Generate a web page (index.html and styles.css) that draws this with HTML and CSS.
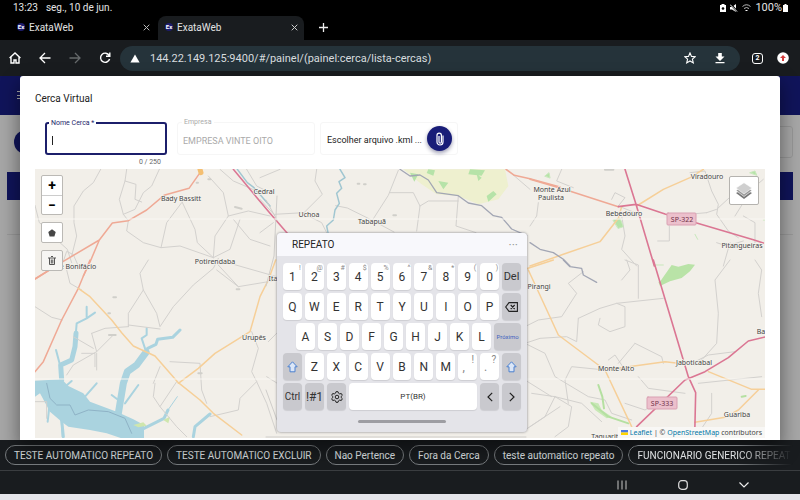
FILE: index.html
```html
<!DOCTYPE html>
<html lang="pt-BR">
<head>
<meta charset="utf-8">
<meta name="viewport" content="width=device-width, initial-scale=1">
<title>ExataWeb</title>
<link rel="stylesheet" href="styles.css">
</head>
<body>
<header class="status">
  <span>13:23</span><span class="date">seg., 10 de jun.</span>
  <div class="status-icons">
    <svg width="6" height="8" viewBox="0 0 6 8"><path fill="#fff" d="M1.5 0h3v1H6v7H0V1h1.500z"/><circle cx="3" cy="4.500" r="1.300" fill="#000"/></svg>
    <svg width="8" height="8" viewBox="0 0 8 8"><path fill="#fff" d="M0 3h2l4-3v8L2 5.500H0z"/><path d="M.5 0l7 8" stroke="#000" stroke-width="2"/><path d="M0 .5l7 7" stroke="#fff"/></svg>
    <svg width="9" height="8" viewBox="0 0 9 8" fill="none" stroke="#bbb"><path d="M.5 2.500q4-3.500 8 0M2 4.500q2.500-2 5 0"/><path d="M3.500 6.500h2" stroke="#fff"/></svg>
    <span class="battery">100%<svg width="5" height="8" viewBox="0 0 5 8"><path fill="#fff" d="M1.500 0h2v1H5v7H0V1h1.500z"/></svg></span>
  </div>
</header>

<nav class="tabs" aria-label="Abas">
  <div class="tab">
    <span class="favicon">Ex</span><span class="tab-name">ExataWeb</span>
    <button class="plain" aria-label="Fechar aba"><svg width="7" height="7" viewBox="0 0 7 7"><path d="M.7.7l5.600 5.600M6.300.7L.7 6.300" stroke="#bbb"/></svg></button>
  </div>
  <div class="tab active">
    <span class="favicon">Ex</span><span class="tab-name">ExataWeb</span>
    <button class="plain" aria-label="Fechar aba"><svg width="7" height="7" viewBox="0 0 7 7"><path d="M.7.7l5.600 5.600M6.300.7L.7 6.300" stroke="#ccc"/></svg></button>
  </div>
  <button class="plain new-tab" aria-label="Nova aba"><svg width="9" height="9" viewBox="0 0 9 9"><path d="M4.500 0v9M0 4.500h9" stroke="#eee" stroke-width="1.300"/></svg></button>
</nav>

<div class="toolbar">
  <div class="nav-buttons">
    <button class="plain" aria-label="Início"><svg width="12" height="12" viewBox="0 0 12 12" fill="none" stroke="#fff" stroke-width="1.400"><path d="M.6 6L6 1l5.400 5M2 5v6h3V8h2v3h3V5"/></svg></button>
    <button class="plain" aria-label="Voltar"><svg width="12" height="12" viewBox="0 0 12 12" fill="none" stroke="#fff" stroke-width="1.300"><path d="M11.500 6H1.200M6 1L1 6l5 5"/></svg></button>
    <button class="plain" aria-label="Avançar"><svg width="12" height="12" viewBox="0 0 12 12" fill="none" stroke="#65696b" stroke-width="1.300"><path d="M.5 6h10.300M6 1l5 5-5 5"/></svg></button>
    <button class="plain" aria-label="Recarregar"><svg width="12" height="12" viewBox="0 0 12 12" fill="none" stroke="#fff" stroke-width="1.400"><path d="M10.200 3.500A4.600 4.600 0 1 0 10.600 7M10.800.5v3.800H7"/></svg></button>
  </div>
  <div class="address">
    <svg width="10" height="9" viewBox="0 0 10 9"><path d="M5 .5L9.600 8.500H.4z" fill="#fff"/></svg>
    <span class="url">144.22.149.125:9400/#/painel/(painel:cerca/lista-cercas)</span>
    <button class="plain" aria-label="Favorito"><svg width="12" height="12" viewBox="0 0 12 12"><path d="M6 .9l1.500 3.500 3.800.3-2.900 2.500.9 3.700L6 9l-3.300 1.900.9-3.700L.7 4.700l3.800-.3z" fill="none" stroke="#fff" stroke-width="1.100"/></svg></button>
    <button class="plain" aria-label="Baixar"><svg width="10" height="12" viewBox="0 0 10 12" fill="#fff"><path d="M3.200 1h3.600v3.500h2.700L5 9 .5 4.500h2.700zM.5 10h9v1.300h-9z"/></svg></button>
  </div>
  <button class="tab-count">2</button>
  <button class="plain" aria-label="Menu"><svg width="12" height="12" viewBox="0 0 12 12"><circle cx="6" cy="6" r="5.800" fill="#fff"/><path d="M6 3l3 3H7v3H5V6H3z" fill="#d33c3c"/></svg></button>
</div>

<main class="page">
  <div class="behind">
    <div class="app-bar"></div>
    <div class="behind-tools"><span class="round"></span><span class="ghost-field"></span></div>
    <div class="table-head"></div>
    <div class="table-row"></div>
    <span class="burger"></span>
  </div>

  <section class="dialog">
    <h1>Cerca Virtual</h1>
    <form class="fields">
      <div class="field name-field">
        <label for="nome">Nome Cerca *</label>
        <input id="nome" type="text">
        <span class="caret"></span>
        <span class="counter">0 / 250</span>
      </div>
      <div class="field company">
        <label for="empresa">Empresa</label>
        <input id="empresa" type="text" value="EMPRESA VINTE OITO" disabled>
      </div>
      <div class="field file">
        <span>Escolher arquivo .kml ...</span>
        <button type="button" class="attach" aria-label="Anexar"><svg width="8" height="14" viewBox="0 0 8 14" fill="none" stroke="#fff" stroke-width="1.200"><path d="M7 3.500v6.500a3 3 0 0 1-6 0V3.300a2.200 2.200 0 0 1 4.400 0V10a1.200 1.200 0 0 1-2.400 0V4"/></svg></button>
      </div>
    </form>

    <div class="map">
      <svg class="map-canvas" viewBox="35 169 730 269" preserveAspectRatio="xMidYMid slice" fill="none" stroke-linejoin="round" stroke-linecap="round">
        <rect x="35" y="169" width="730" height="269" fill="#f2efe9"/>
        <!-- north-west -->
        <g transform="translate(0 76) scale(.33333)">
          <g class="minor">
            <path d="M105 388l13 52 34 25 28 35 22 20 13 40M302 280l-22 40-30 25-28 45v50l8 40-15 60M380 280l-5 35 33 10-3 45 20 8M375 315l-17 55 12 45 15 19M478 280l-23 50-25 20-25 50-35 15M545 380l-45 60-17 75M545 375l40 85 7 40 48 45M385 434l-5 31 50 35 53 15 57-5 100 35M625 300l45 50 15 70-40 60-5 65M685 420l60-15 65 15M660 280l40 35 70 30 40 45M640 545l50-25 30-90M740 280l30 50 40 20M700 430l50 60 60 20M190 556l10-30 20 10 15 34"/>
          </g>
          <path class="water-line" d="M712 280l30 40 20 15 48 55"/>
          <path class="primary" d="M605 283l-38 54-75 21-52 44-55 32-48 7-39 51-108 64L105 609M298 492l-33 78-15 30"/>
          <path class="trunk" d="M700 280l110 132 90 104"/>
          <path d="M600 280l3 10" stroke="#f4bf72" stroke-width="5"/>
          <path d="M705 393l20 5M625 310h6M590 320h4" stroke="#d0cfca" stroke-width="2"/>
        </g>
        <!-- north-centre -->
        <g transform="translate(260 76) scale(.33333)">
          <path d="M430 280l55 45 45 30 65 5 60 25 60-15 30-40-10-50z" fill="#eef0cf"/>
          <path d="M450 290l25 5-12 22zM505 280l20 3-5 16-20-8zM535 315l30 5-15 20zM630 280l45 3-10 16-40-4zM680 360l20-15 10 10-25 22zM650 295l15 10-10 10z" fill="#b6e3a8"/>
          <g class="minor">
            <path d="M415 283l-30 75-48 75M337 433l-75-37-35-7M337 433l65 35M170 280l-5 35 22 40-55 55-90 5-42-45M390 350h70l20 40-10 75M480 390l25-15h90M595 360l-7 90 60 20M145 420l40 20 15 30M0 305l60-25M740 280l70 60M0 470l40-30"/>
          </g>
          <path class="water-line" d="M240 280l15 25-18 12 8 20-15 15 8 30-13 20-5 30-20 18 4 20"/>
          <path class="boundary" d="M420 280l30 20 30-3 25 15 25 38 65 9 30 22 40 8 35 30 25 5 30 35 45 20"/>
          <path class="primary" d="M738 280l25 18 47 10 90 25"/>
          <path d="M293 323h5M312 325h5M400 418h8" stroke="#d0cfca" stroke-width="2"/>
        </g>
        <!-- north-east -->
        <g transform="translate(530 76) scale(.33333)">
          <g class="minor">
            <path d="M95 280l-15 35 50 20M25 380l-5 40-20 30M275 420l10 60-10 40 45 50M480 290l45-5 20 60 20 40-5 30 35 50 30 20M418 450v45h-35M530 410l-110 10M530 410l30-10 60-55M245 370l10-20 30 15-20 25 50 20M560 500l30 10 50-15M640 420l35 20v60M700 310l-35 30-50 80M600 500l-20 70"/>
          </g>
          <path d="M45 300l12-10 3 15zM250 432l20-5 10 25-15 5zM495 475l8 15M660 290l15-5 5 12zM370 567h30M700 432h5" fill="#b6e3a8" stroke="#c8e8bc"/>
          <path class="secondary" d="M0 570l100-35 110-38 55-70 10-35M320 390l80-50 80-35 40-25"/>
          <path class="primary" d="M0 310l100 29 165 53"/>
          <path class="trunk" d="M285 280l33 105 55 185M265 392l53-7 87 29 95 27 170 50 30 10"/>
          <path class="boundary" d="M0 500l30 20 40 10 30 20 20 20"/>
          <path d="M225 281h25" stroke="#d0cfca" stroke-width="2"/>
        </g>
        <!-- south-west -->
        <g transform="translate(0 260) scale(.33333)">
          <path d="M105 362l80-4 20 20 45 22 20 25 40 15 40 15 50 23 32 17v40h-67l-45-15-50-10-65-10-20-15-35-30-30-55-15 10z" fill="#aad3df"/>
          <g class="water-arm">
            <path d="M185 360l-3-45 33-15 10-40 3-40" stroke-width="5"/>
            <path d="M180 315l-12-45M225 250l5-60 30-15 25-17M260 175v-35M355 460l10-55M435 265l-10-30 15-10v-20M375 430l40-55M355 420l-20-15M190 385l25-22M255 410l35-40M185 480l3 50M148 440l-5 45" stroke-width="2"/>
            <path d="M355 460l15-90 12-35 28-20 28-38" stroke-width="7"/>
            <path d="M438 277l5-12 25-12 5-15 45-6 22-22M432 505l60-30 12-25M580 530l5-30 45-38M190 530l-5-50" stroke-width="3"/>
            <path d="M504 450l28-40" stroke-width="1"/>
          </g>
          <path d="M400 495l30-8 10 10-25 5zM490 480l20-10-5 20z" fill="#cfe6ad"/>
          <g class="minor">
            <path d="M105 140l50 32 32 8M445 0l-25 40 10 50-45 70v40M430 90l40 70 10 40 40-60 60-65 60-50 15-30M385 195l95 12M275 220l40-15 70-5M275 220l15 55-70 40-20 30M220 230l60 35M290 275l50-50M650 10l65 70 120-20M690 10l140 40M650 30l65 50M755 215l20 50-20 70 15 30 30 65 30 90M770 365l-50 50-5 35-85 20M805 245l35-35M800 350l40 25M465 370l-5 40 20 30 50-75M510 305l90 5 5 80 15 40M480 320l-20 50M480 440l50 60 30 30M105 425h35v50M200 30l10 40 35 20M245 280h40v40M290 330v-50"/>
          </g>
          <path d="M140 370l10 45 20 20 40 0 15 30 40-15 60 5 50 20 20 45" stroke="#8fb3c6"/>
          <path class="primary" d="M105 57l80-50M270 0l-35 85-50 95-55 125-25 30"/>
          <path class="secondary" d="M235 85l35 25 65 70 30 38 35 40 65 30 70 80 65 52 40 40 85 65M535 370l60-45 50-45 105-65 30-105 25-50 22-60"/>
          <path d="M340 112h8M325 160h5M327 225h20M710 88h8M595 340h10" stroke="#d0cfca" stroke-width="2"/>
        </g>
        <!-- south-east -->
        <g transform="translate(525 260) scale(.33333)">
          <path d="M405 65l35-50 20 5 30-8 20 2-15 20-25 20-35 10-30 14-5-13z" fill="#b9e3a7"/>
          <path d="M195 425l25 5 10 20 30 20-15 5-35-25z" fill="#c8e8b5"/>
          <g class="minor">
            <path d="M0 200l40-20 70-10 45-70-25-30 45-35M160 175l-5 70-30-15-80 5-45 15M160 175l65-30 50-15 25 10v60l-45 15-35-20 5-20M275 130l140-15M300 0l40 15v100M290 60l25-30-10-30M615 0l-45 60 10 100-5 90-45 50-20 15M690 0l20 30-10 70 10 70M0 250l60 30 30 70 100 60 50 10 20 40 60 20M90 410l-70-10M90 410l-30 60-60 40M90 410l50 30-10 60-40 30M90 410l80 20 60 55M240 330l-100-10-20 40 10 70M330 250l80 40 5 20M330 250l-50 60M250 300l20-15 30 45-40-5M340 350l30 35 110 15M300 430l60 20 50-30M500 310l50-25 80-10M520 370l190-20M560 400v60l-40 60M0 360l80 50M15 500l90-60"/>
          </g>
          <path class="boundary" d="M115 0l20 20 35 5 5 20 40 22"/>
          <path d="M220 375l12 35 5 35M650 410l12-2M200 430l50 40 60 20" stroke="#b5e0a1" stroke-width="2"/>
          <path class="secondary" d="M0 28l85-28M10 30l90 195 140 105 80 170M240 330l180-25 40 5M550 335l130 53h40M700 390l-60 60-40 22-90 15"/>
          <path class="trunk" d="M385 0l105 350 22 48-3 132M335 500l145-140 60-25 70-42 60-50 50-12"/>
        </g>
        <path d="M266 286l8-30 3-60M266 200l11 20M266 390l11 30M266 437h260" stroke="#cfcdca"/>
        <path d="M35 219h730M35 379h730" stroke="#f9f7f3" stroke-width="1"/>
        <g class="places">
          <text x="181" y="201">Bady Bassitt</text><text x="264" y="194">Cedral</text>
          <text x="215" y="264">Potirendaba</text><text x="309" y="217">Uchoa</text>
          <text x="372" y="224">Tabapuã</text><text x="552" y="192">Monte Azul</text>
          <text x="551" y="200">Paulista</text><text x="624" y="216">Bebedouro</text>
          <text x="707" y="179">Viradouro</text><text x="742" y="248">Pitangueiras</text>
          <text x="78" y="269">e Bonifácio</text><text x="254" y="340">Urupês</text>
          <text x="273" y="281">Ita</text><text x="539" y="289">Pirangi</text>
          <text x="616" y="371">Monte Alto</text><text x="694" y="365">Jaboticabal</text>
          <text x="737" y="417">Guariba</text><text x="761" y="334">Ba</text>
          <text x="612" y="439">Taquaritinga</text>
        </g>
        <g class="shields">
          <rect x="667" y="213" width="29" height="12" rx="1"/><text x="682" y="222">SP-322</text>
          <rect x="647" y="397" width="30" height="12" rx="1"/><text x="662" y="406">SP-333</text>
        </g>
      </svg>
      <div class="controls">
        <div class="control"><button aria-label="Aproximar">+</button><button aria-label="Afastar">−</button></div>
        <div class="control"><button aria-label="Desenhar polígono"><svg width="8" height="8" viewBox="0 0 8 8"><path d="M4 .3l3.700 2.600-1.300 4.600H1.600L.3 2.900z" fill="#464646"/></svg></button></div>
        <div class="control trash"><button aria-label="Excluir"><svg width="8" height="9" viewBox="0 0 8 9" fill="none" stroke="#555"><path d="M0 2h8M3 .5h2M1.500 2v6.500h5V2M3.300 3.500v4M4.800 3.500v4"/></svg></button></div>
      </div>
      <button class="layers" aria-label="Camadas"><svg width="18" height="18" viewBox="0 0 18 18"><path d="M1 11l8 6 8-6-8-4z" fill="#777"/><path d="M1 8.500l8 6 8-6-8-5z" fill="#999" stroke="#fff" stroke-width=".6"/><path d="M1 6l8 6 8-6-8-5.300z" fill="#cfcfcf" stroke="#fff" stroke-width=".6"/></svg></button>
      <div class="credit"><svg width="7" height="5" viewBox="0 0 7 5"><path fill="#4c7be1" d="M0 0h7v2.500H0z"/><path fill="#ffd500" d="M0 2.500h7V5H0z"/></svg> <a href="#leaflet">Leaflet</a> | © <a href="#osm">OpenStreetMap</a> contributors</div>
    </div>
  </section>

  <section class="keyboard" aria-label="Teclado">
    <div class="suggest"><span>REPEATO</span><span class="dots">···</span></div>
    <div class="keys">
      <div class="key-row">
        <button>1<sup>!</sup></button><button>2<sup>@</sup></button><button>3<sup>#</sup></button><button>4<sup>$</sup></button><button>5<sup>%</sup></button><button>6<sup>^</sup></button><button>7<sup>&amp;</sup></button><button>8<sup>*</sup></button><button>9<sup>(</sup></button><button>0<sup>)</sup></button><button class="dark">Del</button>
      </div>
      <div class="key-row">
        <button>Q</button><button>W</button><button>E</button><button>R</button><button>T</button><button>Y</button><button>U</button><button>I</button><button>O</button><button>P</button><button class="dark" aria-label="Apagar"><svg width="13" height="10" viewBox="0 0 13 10" fill="none" stroke="#222" stroke-width="1.100"><path d="M4 .6h8.400v8.800H4L.7 5zM5.700 3l4 4M9.700 3l-4 4"/></svg></button>
      </div>
      <div class="key-row indent">
        <button>A</button><button>S</button><button>D</button><button>F</button><button>G</button><button>H</button><button>J</button><button>K</button><button>L</button><button class="dark wide next">Próximo</button>
      </div>
      <div class="key-row">
        <button class="dark" aria-label="Maiúsculas"><svg width="11" height="12" viewBox="0 0 11 12"><path d="M5.500.8l4.700 5H8v5H3v-5H.8z" fill="#dbe6f7" stroke="#4c80cf"/></svg></button><button>Z</button><button>X</button><button>C</button><button>V</button><button>B</button><button>N</button><button>M</button><button class="punct">,<sup>!</sup></button><button class="punct">.<sup>?</sup></button><button class="dark" aria-label="Maiúsculas"><svg width="11" height="12" viewBox="0 0 11 12"><path d="M5.500.8l4.700 5H8v5H3v-5H.8z" fill="#dbe6f7" stroke="#4c80cf"/></svg></button>
      </div>
      <div class="key-row">
        <button class="dark ctrl">Ctrl</button><button class="dark symbols">!#1</button><button class="dark" aria-label="Configurações"><svg width="12" height="12" viewBox="0 0 12 12" fill="none" stroke="#222"><path d="M5 .7h2l.5 1.500 1.200.7 1.600-.4 1 1.800L10.200 5.400v1.200l1.100 1.100-1 1.800-1.600-.4-1.200.7L7 11.300H5l-.5-1.500-1.200-.7-1.600.4-1-1.800 1.100-1.100V5.400L.7 4.300l1-1.800 1.600.4 1.200-.7z"/><circle cx="6" cy="6" r="1.800"/></svg></button><button class="wide space">PT(BR)</button><button class="dark" aria-label="Esquerda"><svg width="6" height="10" viewBox="0 0 6 10"><path d="M5.200.8L1 5l4.200 4.200" fill="none" stroke="#222" stroke-width="1.200"/></svg></button><button class="dark" aria-label="Direita"><svg width="6" height="10" viewBox="0 0 6 10"><path d="M.8.8L5 5 .8 9.200" fill="none" stroke="#222" stroke-width="1.200"/></svg></button>
      </div>
    </div>
    <div class="handle"></div>
  </section>
</main>

<div class="chips">
  <button>TESTE AUTOMATICO REPEATO</button><button>TESTE AUTOMATICO EXCLUIR</button><button>Nao Pertence</button><button>Fora da Cerca</button><button>teste automatico repeato</button><button>FUNCIONARIO GENERICO REPEAT</button>
</div>
<footer class="system">
  <button class="plain" aria-label="Recentes"><svg width="10" height="10" viewBox="0 0 10 10"><path d="M1 .5v9M5 .5v9M9 .5v9" stroke="#aaa" stroke-width="1.200"/></svg></button>
  <button class="plain" aria-label="Tela inicial"><svg width="10" height="10" viewBox="0 0 10 10"><rect x=".7" y=".7" width="8.600" height="8.600" rx="3" fill="none" stroke="#ddd" stroke-width="1.200"/></svg></button>
  <button class="plain" aria-label="Ocultar teclado"><svg width="10" height="10" viewBox="0 0 10 10"><path d="M.5 2.500L5 7l4.500-4.500" fill="none" stroke="#eee" stroke-width="1.200"/></svg></button>
</footer>
</body>
</html>
```
FILE: styles.css
```css
* { box-sizing: border-box; }
body {
  margin: 0;
  height: 100vh;
  padding-bottom: 6px;
  display: flex;
  flex-direction: column;
  overflow: hidden;
  background: #e4e4e9;
  font-family: Roboto, "Liberation Sans", sans-serif;
  font-size: 10px;
  color: #222;
}
button { font: inherit; color: inherit; margin: 0; padding: 0; border: 0; cursor: pointer; }
svg { display: block; flex: none; }
.plain { background: none; display: flex; align-items: center; justify-content: center; }

/* Android status bar and browser chrome */
.status {
  height: 16px;
  padding: 0 12px 1px 13px;
  display: flex;
  align-items: center;
  gap: 8px;
  background: #000;
  color: #e4e4e4;
}
.status-icons { margin-left: auto; display: flex; align-items: center; gap: 4px; }
.battery { display: flex; align-items: center; gap: 1px; font-size: 11px; line-height: 12px; }
.tabs { height: 24px; display: flex; background: #000; color: #e3e3e3; }
.tab { width: 146px; margin-left: 12px; padding: 0 8px 2px 5px; display: flex; align-items: center; gap: 4px; border-radius: 8px 8px 0 0; }
.tab + .tab { margin-left: 0; padding-left: 7px; padding-right: 6px; }
.active { background: #191c1f; }
.tab-name { flex: 1; }
.favicon { width: 8px; height: 8px; border-radius: 4px; background: #1d1c6c; color: #fff; font-size: 6px; line-height: 8px; text-align: center; font-weight: bold; }
.new-tab { width: 38px; padding-bottom: 2px; }
.toolbar { height: 36px; padding: 0 11px 0 9px; display: flex; align-items: center; gap: 12px; background: #191c1f; }
.nav-buttons { display: flex; gap: 18px; }
.address {
  flex: 1;
  height: 25px;
  margin-left: -3px;
  padding: 0 15px 0 10px;
  display: flex;
  align-items: center;
  gap: 10px;
  border-radius: 13px;
  background: #25333a;
  color: #d7dcdf;
  font-size: 11px;
}
.url { flex: 1; white-space: nowrap; }
.address .plain + .plain { margin-left: 9px; }
.tab-count { width: 11px; height: 11px; border: 1px solid #fff; border-radius: 3px; background: none; color: #fff; font-size: 7px; font-weight: bold; line-height: 9px; }
.tab-count + .plain { margin-left: 2px; }

/* Page under the dialog */
.page { flex: 1; min-height: 0; position: relative; background: #a6a6a6; }
.behind { position: absolute; inset: 0; overflow: hidden; }
.app-bar { height: 39px; background: #10145a; }
.behind-tools { height: 57px; padding: 11px 7px 0 14px; display: flex; justify-content: space-between; }
.round { width: 24px; height: 24px; margin-top: 4px; border-radius: 12px; background: #10145a; }
.ghost-field { width: 120px; height: 32px; border: 1px solid #969696; border-radius: 3px; }
.table-head { height: 28px; margin: 0 7px; background: #10145a; }
.table-row { height: 35px; margin: 0 7px; border-bottom: 1px solid #989898; }
.burger { position: absolute; left: 17px; top: 15px; width: 10px; height: 8px; border-top: 1px solid #aaa; border-bottom: 1px solid #aaa; background: linear-gradient(#aaa, #aaa) center / 100% 1px no-repeat; }

.dialog {
  position: absolute;
  inset: 0 20px;
  padding: 0 15px 2px;
  display: flex;
  flex-direction: column;
  background: #fff;
  border-radius: 3px 3px 0 0;
  box-shadow: 0 8px 18px 2px rgba(0, 0, 0, .4);
}
h1 { margin: 16px 0; font-size: 10px; line-height: 14px; font-weight: 400; }
.fields { height: 47px; margin: 0; padding-left: 10px; display: flex; align-items: flex-start; font-size: 9px; }
.field { position: relative; width: 138px; height: 33px; border: 1px solid #f6f6f6; border-radius: 3px; }
.field label { position: absolute; left: 4px; top: -5px; padding: 0 2px; background: #fff; font-size: 7px; line-height: 9px; white-space: nowrap; }
.field input { width: 100%; height: 100%; padding: 4px 5px 0; border: 0; outline: 0; background: none; font: inherit; }
.name-field { width: 122px; margin-right: 10px; border: 2px solid #1c1f6b; }
.name-field label { left: 2px; color: #1c1f6b; }
.caret { position: absolute; left: 5px; top: 12px; width: 1px; height: 9px; background: #222; }
.counter { position: absolute; right: 4px; top: 34px; font-size: 7px; line-height: 9px; color: #666; }
.company { margin-right: 5px; }
.company label, .company input { color: #aaa; }
.file { padding: 0 5px 0 6px; display: flex; align-items: center; justify-content: space-between; white-space: nowrap; }
.file span { padding-top: 3px; }
.attach { width: 25px; height: 25px; border-radius: 13px; background: #191d78; display: flex; align-items: center; justify-content: center; box-shadow: 0 2px 4px rgba(0, 0, 60, .4); }

/* Map */
.map { flex: 1; min-height: 0; position: relative; overflow: hidden; }
.map-canvas { width: 100%; height: 100%; }
.map-canvas path { vector-effect: non-scaling-stroke; }
.minor { stroke: #d3d1ce; stroke-width: 1; }
.primary { stroke: #efa995; stroke-width: 1.5; }
.secondary { stroke: #f6cf98; stroke-width: 1.5; }
.trunk { stroke: #db7693; stroke-width: 1.6; }
.water-line { stroke: #a0c6d1; stroke-width: 1.5; }
.water-arm { stroke: #aad3df; }
.boundary { stroke: #a2a6b4; stroke-width: 1.3; }
.places { font: 7px "Noto Sans", sans-serif; fill: #444; text-anchor: middle; stroke: #f5f3ee; stroke-width: 1.5px; paint-order: stroke; }
.shields { font: 7px "Noto Sans", sans-serif; text-anchor: middle; fill: #713048; }
.shields rect { fill: #ecc0cc; stroke: #d9a0b2; }
.controls { position: absolute; left: 6px; top: 6px; display: flex; flex-direction: column; gap: 6px; }
.control { width: 22px; border: 1px solid #bbb9b5; border-radius: 2px; background: #fff; }
.control button { width: 20px; height: 19px; display: flex; align-items: center; justify-content: center; background: none; font-size: 14px; font-weight: bold; line-height: 19px; color: #000; }
.control button + button { border-top: 1px solid #ccc; }
.control + .control { margin-top: 1px; }
.trash { background: #f6f5f3; }
.layers { position: absolute; right: 6px; top: 7px; width: 30px; height: 29px; border: 1px solid #b5b3af; border-radius: 2px; background: #fff; display: flex; align-items: center; justify-content: center; }
.credit { position: absolute; right: 0; bottom: 0; padding: 0 3px; background: #f8f7f5; font-family: "Noto Sans", sans-serif; font-size: 7px; line-height: 11px; color: #444; }
.credit svg { display: inline-block; }
.credit a { color: #0078a8; text-decoration: none; }

/* Floating keyboard */
.keyboard {
  position: absolute;
  left: 50%;
  top: 157px;
  width: 250px;
  margin-left: -123px;
  border-radius: 4px;
  overflow: hidden;
  background: #e4e4e9;
  box-shadow: 0 0 2px 1px rgba(90, 90, 100, .35);
}
.suggest { height: 23px; padding: 0 9px 0 15px; display: flex; align-items: center; justify-content: space-between; background: #f8f8fc; }
.dots { color: #999; font-size: 12px; }
.keys { padding: 7px 6px 0; display: flex; flex-direction: column; gap: 3px; }
.key-row { display: flex; gap: 3px; }
.key-row button { position: relative; width: 19px; height: 27px; border-radius: 4px; background: #fff; color: #333; font-size: 12px; display: flex; align-items: center; justify-content: center; box-shadow: 0 1px 1px rgba(0, 0, 0, .1); }
.key-row sup { position: absolute; right: 1px; top: 1px; font-size: 7px; line-height: 8px; color: #888; }
.key-row .dark { background: #c9c9ce; font-size: 11px; }
.key-row .ctrl { font-size: 10px; }
.key-row .symbols { font-size: 12px; }
.key-row .wide { flex: 1; }
.indent { padding-left: 13px; }
.key-row .next { font-size: 6px; color: #3f62c0; }
.key-row .space { font-size: 8px; }
.key-row .punct { padding-right: 8px; color: #888; }
.key-row .punct sup { top: 3px; right: 3px; font-size: 10px; }
.handle { width: 88px; height: 3px; margin: 10px auto 9px; border-radius: 2px; background: #9d9da2; }

/* Suggestions and system buttons */
.chips { height: 31px; padding: 5px 0 0 5px; display: flex; gap: 5px; overflow: hidden; background: #191c1f; border-bottom: 1px solid #3a3d40; }
.chips button { flex: none; height: 20px; padding: 0 8px; border: 1px solid #777b7e; border-radius: 10px; background: none; color: #dfe1e3; font-size: 10px; white-space: nowrap; }
.chips button:last-child { mask-image: linear-gradient(90deg, #000 110px, transparent 165px); }
.system { height: 23px; padding: 4px 51px 0; display: flex; align-items: center; justify-content: flex-end; gap: 51px; background: #191c1f; }
```
